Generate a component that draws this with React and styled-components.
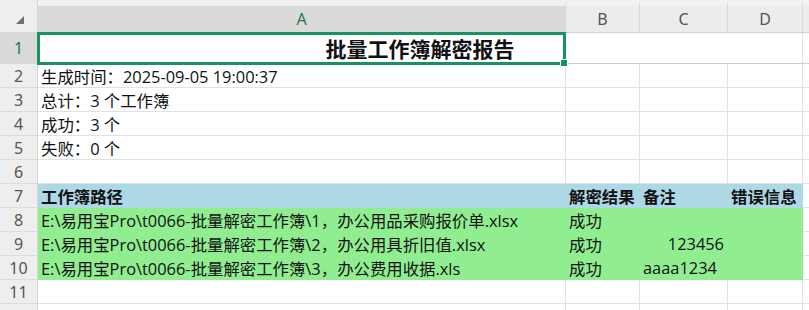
import React from 'react';
import styled, { createGlobalStyle } from 'styled-components';

const GlobalStyle = createGlobalStyle`
   html, body {
      margin: 0;
      padding: 0;
      background: #fff;
   }
   body {
      font-family: "Open Sans", "Noto Sans CJK SC", sans-serif;
   }
`;

const columns = [
   { key: 'A', active: true },
   { key: 'B' },
   { key: 'C' },
   { key: 'D' },
];

const infoRows = [
   '生成时间：2025-09-05 19:00:37',
   '总计：3 个工作簿',
   '成功：3 个',
   '失败：0 个',
];

const results = [
   { path: 'E:\\易用宝Pro\\t0066-批量解密工作簿\\1，办公用品采购报价单.xlsx', status: '成功', note: '', align: 'left' },
   { path: 'E:\\易用宝Pro\\t0066-批量解密工作簿\\2，办公用具折旧值.xlsx', status: '成功', note: '123456', align: 'right' },
   { path: 'E:\\易用宝Pro\\t0066-批量解密工作簿\\3，办公费用收据.xls', status: '成功', note: 'aaaa1234', align: 'left' },
];

function App() {
   return (
      <>
         <GlobalStyle />
         <Sheet>
            {/* 머리줄: 모서리 + 열 이름 */}
            <Corner>
               <SelectAll />
            </Corner>
            {columns.map((c) => (
               <ColHeader key={c.key} $active={c.active}>{c.key}</ColHeader>
            ))}
            <ColHeader $rest />

            {/* 1행: 병합된 제목 */}
            <RowHeader $active>1</RowHeader>
            <TitleCell>
               批量工作簿解密报告
               <Selection>
                  <Handle />
               </Selection>
            </TitleCell>
            <Cell $title $rest />

            {infoRows.map((text, i) => (
               <React.Fragment key={i}>
                  <RowHeader>{i + 2}</RowHeader>
                  <Cell>{text}</Cell>
                  <Cell />
                  <Cell />
                  <Cell />
                  <Cell $rest />
               </React.Fragment>
            ))}

            <RowHeader>6</RowHeader>
            <Cell />
            <Cell />
            <Cell />
            <Cell />
            <Cell $rest />

            <RowHeader>7</RowHeader>
            <Cell $fill="#add8e6" $bold>工作簿路径</Cell>
            <Cell $fill="#add8e6" $bold>解密结果</Cell>
            <Cell $fill="#add8e6" $bold>备注</Cell>
            <Cell $fill="#add8e6" $bold>错误信息</Cell>
            <Cell $rest />

            {results.map((r, i) => (
               <React.Fragment key={i}>
                  <RowHeader>{i + 8}</RowHeader>
                  <Cell $fill="#90ee90">{r.path}</Cell>
                  <Cell $fill="#90ee90">{r.status}</Cell>
                  <Cell $fill="#90ee90" $align={r.align}>{r.note}</Cell>
                  <Cell $fill="#90ee90" />
                  <Cell $rest />
               </React.Fragment>
            ))}

            <RowHeader>11</RowHeader>
            <Cell />
            <Cell />
            <Cell />
            <Cell />
            <Cell $rest />

            <RowHeader />
            <Cell />
            <Cell />
            <Cell />
            <Cell />
            <Cell $rest />
         </Sheet>
      </>
   );
}

const Sheet = styled.div`
   display: grid;
   grid-template-columns: 38px 528px 74px 88px 75px 1fr;
   grid-template-rows: 33px 31px;
   grid-auto-rows: 24px;
   width: 809px;
   height: 310px;
   overflow: hidden;
   font-size: 16.4px;
   color: #111;
`;

const Corner = styled.div`
   position: relative;
   background: #eeeeee;
   border-right: 1px solid #d6d6d6;
   border-bottom: 1px solid #d6d6d6;
   box-sizing: border-box;
`;

const SelectAll = styled.div`
   position: absolute;
   right: 13px;
   bottom: 8px;
   width: 0;
   height: 0;
   border-left: 8px solid transparent;
   border-bottom: 8px solid #6e6e6e;
`;

const ColHeader = styled.div`
   display: flex;
   align-items: center;
   justify-content: center;
   box-sizing: border-box;
   background: ${(p) => (p.$active ? '#dadada' : '#ececec')};
   border-top: 6px solid #f1f1f1;
   border-right: 1px solid ${(p) => (p.$rest ? 'transparent' : '#d8d8d8')};
   border-bottom: 1px solid #d0d0d0;
   color: ${(p) => (p.$active ? '#217a4f' : '#555')};
   font-family: "Noto Sans", sans-serif;
   font-size: 16px;
`;

const RowHeader = styled.div`
   display: flex;
   align-items: center;
   justify-content: center;
   box-sizing: border-box;
   background: ${(p) => (p.$active ? '#d9d9d9' : '#eeeeee')};
   border-right: 1px solid #d6d6d6;
   border-bottom: 1px solid #dcdcdc;
   color: ${(p) => (p.$active ? '#217a4f' : '#555')};
   font-family: "Noto Sans", sans-serif;
   font-size: 16px;
`;

const Cell = styled.div`
   display: flex;
   align-items: center;
   justify-content: ${(p) => (p.$align === 'right' ? 'flex-end' : 'flex-start')};
   box-sizing: border-box;
   padding: 0 3px;
   white-space: nowrap;
   overflow: visible;
   background: ${(p) => p.$fill || '#fff'};
   border-right: 1px solid ${(p) => (p.$rest ? 'transparent' : p.$fill || '#e1e1e1')};
   border-bottom: 1px solid ${(p) => (p.$title ? '#cfcfcf' : p.$fill || '#e1e1e1')};
   font-weight: ${(p) => (p.$bold ? 700 : 400)};
`;

const TitleCell = styled.div`
   grid-column: span 4;
   position: relative;
   display: flex;
   align-items: center;
   justify-content: center;
   box-sizing: border-box;
   border-right: 1px solid #e1e1e1;
   border-bottom: 1px solid #cfcfcf;
   font-size: 21px;
   font-weight: 700;
   padding-bottom: 1px;
`;

const Selection = styled.div`
   position: absolute;
   left: -1px;
   top: -1px;
   width: 529px;
   height: 33px;
   box-sizing: border-box;
   border: 3px solid #18925e;
   pointer-events: none;
`;

const Handle = styled.div`
   position: absolute;
   right: -5px;
   bottom: -5px;
   width: 6px;
   height: 6px;
   background: #18925e;
   border: 1px solid #fff;
`;

export default App;
